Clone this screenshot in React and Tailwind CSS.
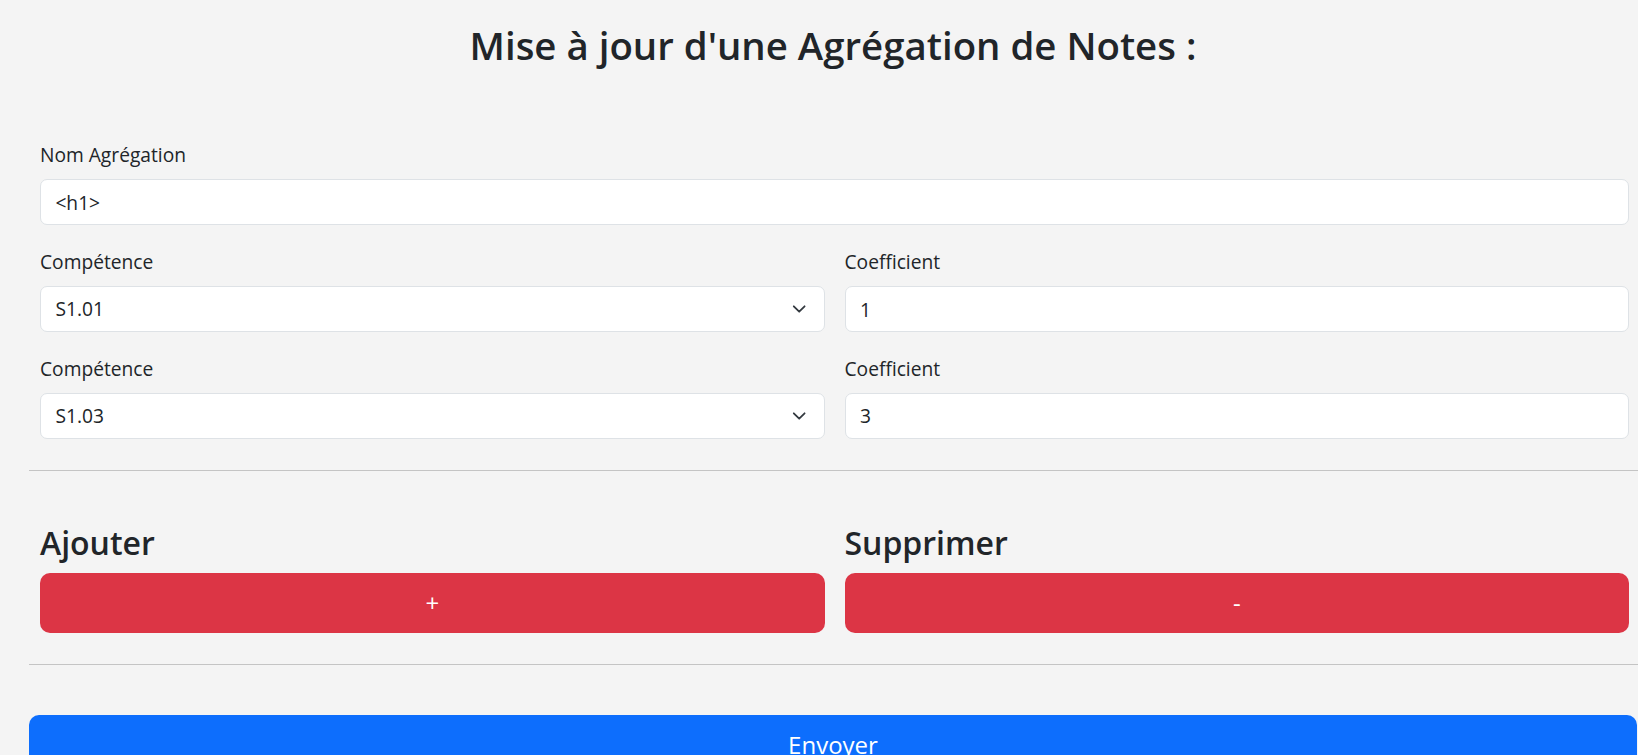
const fieldClass =
  "w-full h-[46px] bg-white border border-[#dee2e6] rounded-[7px] px-[14.4px] text-[19.2px] text-[#212529] outline-none";

const Label = ({ children }) => (
  <label className="block text-[19.2px] leading-[28.8px] mb-[9.6px]">{children}</label>
);

const Select = ({ value }) => (
  <div className="relative">
    <select defaultValue={value} className={`${fieldClass} appearance-none`}>
      <option value="S1.01">S1.01</option>
      <option value="S1.02">S1.02</option>
      <option value="S1.03">S1.03</option>
    </select>
    <svg
      className="absolute right-[18px] top-1/2 -translate-y-1/2 pointer-events-none"
      width="14.4"
      height="14.4"
      viewBox="0 0 16 16"
    >
      <path d="M2 5l6 6 6-6" fill="none" stroke="#343a40" strokeWidth="2" strokeLinecap="round" strokeLinejoin="round" />
    </svg>
  </div>
);

const lignes = [
  { competence: 'S1.01', coef: '1' },
  { competence: 'S1.03', coef: '3' },
];

export default function App() {
  return (
    <div
      className="min-h-screen bg-[#f4f4f4] text-[#212529] pl-[29px] pr-[1px] overflow-hidden"
      style={{ fontFamily: '"Open Sans", "Noto Sans", sans-serif' }}
    >
      {/* Titre */}
      <h1 className="text-center text-[38.4px] leading-[48px] font-semibold pt-[21px]">
        Mise à jour d'une Agrégation de Notes :
      </h1>

      <form onSubmit={(e) => e.preventDefault()}>
        <div className="ml-[11px] mr-[8px] mt-[72px]">
          <Label>Nom Agrégation</Label>
          <input type="text" defaultValue="<h1>" className={fieldClass} />

          {lignes.map((l, i) => (
            <div key={i} className="grid grid-cols-2 gap-x-[20px] mt-[22.4px]">
              <div>
                <Label>Compétence</Label>
                <Select value={l.competence} />
              </div>
              <div>
                <Label>Coefficient</Label>
                <input type="text" defaultValue={l.coef} className={fieldClass} />
              </div>
            </div>
          ))}
        </div>

        <hr className="mt-[31px] border-0 border-t border-[#c4c4c4] -mr-[1px]" />

        {/* Ajouter / Supprimer */}
        <div className="grid grid-cols-2 gap-x-[20px] ml-[11px] mr-[8px] mt-[52px]">
          <div>
            <h3 className="text-[32px] leading-[40.3px] font-semibold mb-[10px]">Ajouter</h3>
            <button type="button" className="w-full h-[60px] rounded-[10px] bg-[#dc3545] text-white text-[24px]">
              +
            </button>
          </div>
          <div>
            <h3 className="text-[32px] leading-[40.3px] font-semibold mb-[10px]">Supprimer</h3>
            <button type="button" className="w-full h-[60px] rounded-[10px] bg-[#dc3545] text-white text-[24px]">
              -
            </button>
          </div>
        </div>

        <hr className="mt-[30.6px] border-0 border-t border-[#c4c4c4] -mr-[1px]" />

        <button
          type="submit"
          className="w-full h-[60px] mt-[50px] rounded-[10px] bg-[#0d6efd] text-white text-[24px] leading-[36px]"
        >
          Envoyer
        </button>
      </form>
    </div>
  );
}
